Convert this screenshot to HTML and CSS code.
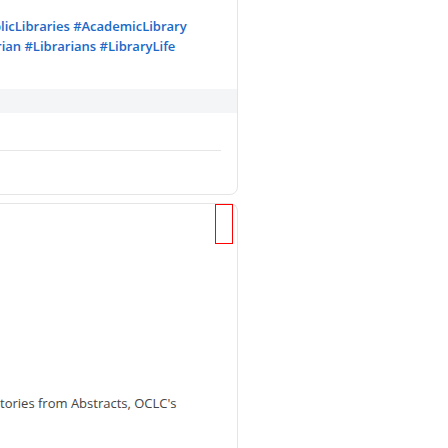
FILE: index.html
```html
<!DOCTYPE html>
<html lang="en">
<head>
<meta charset="utf-8">
<title>Feed</title>
<link rel="stylesheet" href="styles.css">
</head>
<body>
<main class="feed">
  <article class="card card-post">
    <p class="tags">
      <a href="#">#Library</a> <a href="#">#PublicLibraries</a> <a href="#">#AcademicLibrary</a><br>
      <a href="#">#Book</a> <a href="#">#Librarian</a> <a href="#">#Librarians</a> <a href="#">#LibraryLife</a>
    </p>
    <div class="band"></div>
    <div class="actions">
      <hr class="divider">
    </div>
  </article>
  <article class="card card-link">
    <span class="marker"></span>
    <div class="media"></div>
    <p class="desc">Discover our Stories from Abstracts, OCLC's</p>
  </article>
</main>
</body>
</html>
```
FILE: styles.css
```css
html, body {
  margin: 0;
  background: #ffffff;
  overflow: hidden;
}

body {
  font-family: "Open Sans", "Noto Sans", sans-serif;
  font-size: 13px;
  line-height: 20px;
}

.feed {
  width: 343px;
  margin-left: -105px;
  margin-top: -12px;
  display: flex;
  flex-direction: column;
  gap: 8px;
}

.card {
  position: relative;
  background: #ffffff;
  border: 1px solid #e5e5e5;
  border-radius: 8px;
}

.tags {
  margin: 0;
  padding: 27px 16px 33px;
  font-weight: 600;
}

.tags a {
  color: #1b69c6;
  text-decoration: none;
}

.band {
  height: 24px;
  background: #f4f5f7;
}

.actions {
  height: 81px;
  padding: 37px 16px 0;
  box-sizing: border-box;
}

.divider {
  margin: 0;
  border: 0;
  height: 1px;
  background: #e6e6e6;
}

.card-link {
  border-bottom: 0;
  border-radius: 8px 8px 0 0;
}

.marker {
  position: absolute;
  top: 0;
  right: 4px;
  width: 18px;
  height: 40px;
  box-sizing: border-box;
  border: 1px solid #ff0000;
}

.media {
  height: 189px;
}

.desc {
  margin: 0;
  padding: 0 16px 40px 17px;
  color: #444444;
}
```
